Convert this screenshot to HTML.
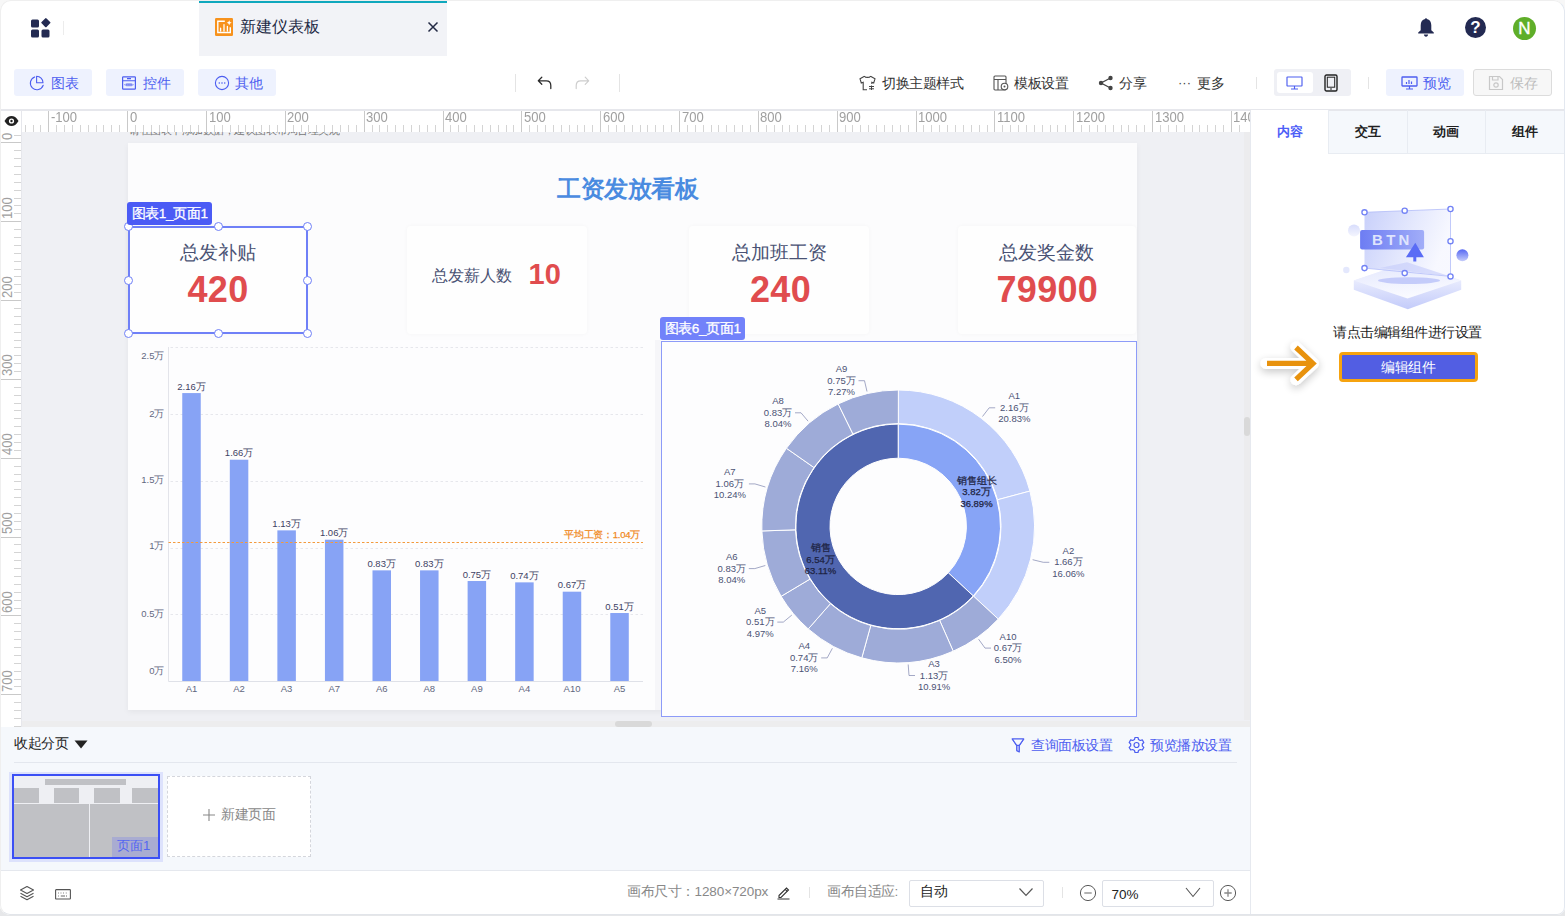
<!DOCTYPE html>
<html><head><meta charset="utf-8">
<style>
*{box-sizing:border-box;margin:0;padding:0}
html,body{width:1565px;height:916px;overflow:hidden;background:linear-gradient(#f7f7f7,#f7f7f7 800px,#e6e7e9 900px);font-family:"Liberation Sans",sans-serif;color:#222}
.abs{position:absolute}
#page{position:absolute;left:0;top:0;width:1565px;height:915px;background:#fff;border-radius:11px 12px 8px 10px;overflow:hidden}
#pb{position:absolute;left:0;top:0;width:1565px;height:915px;border:1px solid #efefef;border-right-color:#e3e8f0;border-bottom-color:#e2e5ea;border-radius:11px 12px 8px 10px;pointer-events:none}
.t{position:absolute;white-space:nowrap;line-height:1}
.btn{position:absolute;top:69px;height:27px;width:78px;background:#eef2fe;border-radius:3px}
.sep{position:absolute;width:1px;background:#e4e4e4}
</style></head><body>
<div id="page">
<!-- HEADER -->
<svg class="abs" style="left:30px;top:18px" width="22" height="21" viewBox="0 0 22 21">
 <rect x="1" y="1.5" width="8" height="8" rx="1.5" fill="#232a52"/>
 <rect x="1" y="11.5" width="8" height="8" rx="1.5" fill="#232a52"/>
 <rect x="11.5" y="11.5" width="8" height="8" rx="1.5" fill="#232a52"/>
 <rect x="12" y="1" width="7" height="7" rx="1" fill="#232a52" transform="rotate(45 15.5 5)"/>
</svg>
<div class="sep" style="left:63px;top:21px;height:14px;background:#ececec"></div>
<div class="abs" style="left:199px;top:0;width:248px;height:56px;background:#f2f3f7;border-top:3px solid #0fa8bd"></div>
<svg class="abs" style="left:215px;top:18px" width="18" height="18" viewBox="0 0 18 18">
 <rect width="18" height="18" rx="1.2" fill="#f7921c"/>
 <path d="M9.8 3.2H2.8V14.5H15.3V9.2" stroke="#fff" stroke-width="1.4" fill="none"/>
 <path d="M5.6 13V10.2M9 13V6.6M12.4 13V8.4" stroke="#fff" stroke-width="1.3" stroke-linecap="round"/>
 <path d="M14.2 2.3Q14.5 4.5 16.7 4.8Q14.5 5.1 14.2 7.3Q13.9 5.1 11.7 4.8Q13.9 4.5 14.2 2.3Z" fill="#fff"/>
</svg>
<div class="t" style="left:240px;top:19px;font-size:16px;color:#232a45">新建仪表板</div>
<svg class="abs" style="left:427px;top:21px" width="12" height="12" viewBox="0 0 12 12"><path d="M1.5 1.5L10.5 10.5M10.5 1.5L1.5 10.5" stroke="#232a45" stroke-width="1.5"/></svg>

<svg class="abs" style="left:1417px;top:17px" width="18" height="21" viewBox="0 0 18 21">
 <path d="M9 1.2C9.7 1.2 9.9 1.6 9.9 2.1C12.7 2.7 14.3 5 14.3 8.2V13.2L16.8 15.5V16.5H1.2V15.5L3.7 13.2V8.2C3.7 5 5.3 2.7 8.1 2.1C8.1 1.6 8.3 1.2 9 1.2Z" fill="#232a52"/>
 <path d="M6.9 17.4H11.1C11.1 18.6 10.2 19.7 9 19.7S6.9 18.6 6.9 17.4Z" fill="#232a52"/>
</svg>
<div class="abs" style="left:1465px;top:17px;width:21px;height:21px;border-radius:50%;background:#232a52;color:#fff;font-size:17px;font-weight:bold;text-align:center;line-height:22px">?</div>
<div class="abs" style="left:1513px;top:16.5px;width:23px;height:23px;border-radius:50%;background:#5fae29;color:#fff;font-size:17px;-webkit-text-stroke:0.4px #fff;text-align:center;line-height:23px">N</div>

<!-- TOOLBAR -->
<div class="btn" style="left:14px"></div>
<div class="btn" style="left:106px"></div>
<div class="btn" style="left:198px"></div>
<svg class="abs" style="left:29px;top:75px" width="16" height="16" viewBox="0 0 16 16"><path d="M5.7 1.9A6.6 6.6 0 1 0 14.2 10.3" fill="none" stroke="#4d5ef0" stroke-width="1.1" stroke-linecap="round"/><path d="M7.6 1.3V7.7H14A6.4 6.4 0 0 0 7.6 1.3Z" fill="none" stroke="#4d5ef0" stroke-width="1.1" stroke-linejoin="round"/></svg>
<div class="t" style="left:51px;top:77px;font-size:13.5px;letter-spacing:-0.5px;color:#4d5ef0">图表</div>
<svg class="abs" style="left:121px;top:75px" width="16" height="16" viewBox="0 0 16 16"><rect x="1.6" y="1.8" width="12.8" height="12.4" rx="0.8" fill="none" stroke="#4d5ef0" stroke-width="1.2"/><path d="M1.6 5.8H14.4M6 3.6H10" stroke="#4d5ef0" stroke-width="1.1"/><rect x="4.2" y="8.2" width="7.6" height="3" rx="1.5" fill="#8e99f5"/><path d="M3 9.7H13" stroke="#4d5ef0" stroke-width="0.6" stroke-dasharray="1,1.2"/></svg>
<div class="t" style="left:143px;top:77px;font-size:13.5px;letter-spacing:-0.5px;color:#4d5ef0">控件</div>
<svg class="abs" style="left:214px;top:75px" width="16" height="16" viewBox="0 0 16 16"><circle cx="8" cy="8" r="6.6" fill="none" stroke="#4d5ef0" stroke-width="1.1"/><circle cx="5.3" cy="8" r=".8" fill="#4d5ef0"/><circle cx="8" cy="8" r=".8" fill="#4d5ef0"/><circle cx="10.7" cy="8" r=".8" fill="#4d5ef0"/></svg>
<div class="t" style="left:235px;top:77px;font-size:13.5px;letter-spacing:-0.5px;color:#4d5ef0">其他</div>

<div class="sep" style="left:515px;top:74px;height:18px"></div>
<svg class="abs" style="left:537px;top:76px" width="16" height="14" viewBox="0 0 16 14"><path d="M4.8 1.2L1.3 4.8L4.8 8.3M1.3 4.8H9.3C12 4.8 13.8 6.6 13.8 9.6V12.6" fill="none" stroke="#2a2a2a" stroke-width="1.25" stroke-linecap="round" stroke-linejoin="round"/></svg>
<svg class="abs" style="left:574px;top:76px" width="16" height="14" viewBox="0 0 16 14"><path d="M11.2 1.2L14.7 4.8L11.2 8.3M14.7 4.8H6.7C4 4.8 2.2 6.6 2.2 9.6V12.6" fill="none" stroke="#cdcdcd" stroke-width="1.15" stroke-linecap="round" stroke-linejoin="round"/></svg>
<div class="sep" style="left:619px;top:74px;height:18px"></div>

<svg class="abs" style="left:859px;top:75px" width="17" height="16" viewBox="0 0 17 16"><path d="M5.5 1.2L1 3.8L2.3 8L4.2 7.3V14.8H8M11.5 1.2L16 3.8L14.7 8L12.8 7.3V9M5.5 1.2C6.3 2.8 10.7 2.8 11.5 1.2" fill="none" stroke="#444" stroke-width="1.1"/><path d="M10 11.5H15M10 13.8H15M12.5 10.5V15" stroke="#444" stroke-width="1"/></svg>
<div class="t" style="left:882px;top:77px;font-size:13.5px;letter-spacing:-0.5px;color:#333">切换主题样式</div>
<svg class="abs" style="left:993px;top:75px" width="16" height="16" viewBox="0 0 16 16"><rect x="1" y="1" width="12" height="14" rx="1" fill="none" stroke="#555" stroke-width="1.1"/><path d="M1 4.5H13M5 4.5V15" stroke="#555" stroke-width="1.1"/><circle cx="11.5" cy="11.5" r="3.3" fill="#fff" stroke="#555" stroke-width="1.1"/><circle cx="11.5" cy="11.5" r="1" fill="#555"/></svg>
<div class="t" style="left:1014px;top:77px;font-size:13.5px;letter-spacing:-0.5px;color:#333">模板设置</div>
<svg class="abs" style="left:1098px;top:75px" width="16" height="16" viewBox="0 0 16 16"><circle cx="12.5" cy="3" r="2.2" fill="#444"/><circle cx="3" cy="8" r="2.2" fill="#444"/><circle cx="12.5" cy="13" r="2.2" fill="#444"/><path d="M12.5 3L3 8L12.5 13" fill="none" stroke="#444" stroke-width="1.3"/></svg>
<div class="t" style="left:1119px;top:77px;font-size:13.5px;letter-spacing:-0.5px;color:#333">分享</div>
<div class="t" style="left:1178px;top:75.5px;font-size:13px;color:#444;letter-spacing:0px">···</div>
<div class="t" style="left:1197px;top:77px;font-size:13.5px;letter-spacing:-0.5px;color:#333">更多</div>
<div class="sep" style="left:1256px;top:77px;height:12px"></div>
<div class="abs" style="left:1274px;top:69px;width:77px;height:27px;background:#eff0f5;border-radius:3px"></div>
<div class="abs" style="left:1277px;top:72px;width:36px;height:21px;background:#fff;border-radius:3px"></div>
<svg class="abs" style="left:1286px;top:76px" width="17" height="14" viewBox="0 0 17 14"><rect x="1" y="1" width="15" height="9" rx=".5" fill="none" stroke="#4d5ef0" stroke-width="1.15"/><path d="M8.5 10V12.5M5 13H12" stroke="#4d5ef0" stroke-width="1.15"/></svg>
<svg class="abs" style="left:1324px;top:74px" width="14" height="18" viewBox="0 0 14 18"><rect x="1" y="1" width="12" height="16" rx="1.5" fill="none" stroke="#222" stroke-width="1.4"/><rect x="3.3" y="3.2" width="7.4" height="10" fill="none" stroke="#222" stroke-width="1"/><path d="M6 15H8" stroke="#222" stroke-width="1"/></svg>
<div class="sep" style="left:1368px;top:77px;height:12px"></div>
<div class="abs" style="left:1386px;top:69px;width:78px;height:27px;background:#eef2fe;border-radius:3px"></div>
<svg class="abs" style="left:1401px;top:76px" width="17" height="14" viewBox="0 0 17 14"><rect x="1" y="1" width="15" height="9" rx=".5" fill="none" stroke="#4d5ef0" stroke-width="1.3"/><path d="M8.5 10V12.5M5 13H12M5.5 8V6M8 8V4M10.5 8V5.5" stroke="#4d5ef0" stroke-width="1.2"/></svg>
<div class="t" style="left:1423px;top:77px;font-size:13.5px;letter-spacing:-0.5px;color:#4d5ef0">预览</div>
<div class="abs" style="left:1473px;top:69px;width:79px;height:27px;background:#f7f7f7;border:1px solid #dcdcdc;border-radius:3px"></div>
<svg class="abs" style="left:1488px;top:75px" width="16" height="16" viewBox="0 0 16 16"><path d="M1.5 1.5H11.5L14.5 4.5V14.5H1.5Z" fill="none" stroke="#c8c8c8" stroke-width="1.2"/><path d="M4.5 1.5V5H10V1.5" fill="none" stroke="#c8c8c8" stroke-width="1.2"/><circle cx="8" cy="10" r="2.2" fill="none" stroke="#c8c8c8" stroke-width="1.2"/></svg>
<div class="t" style="left:1510px;top:77px;font-size:13.5px;letter-spacing:-0.5px;color:#bdbdbd">保存</div>

<!-- RULERS & CANVAS -->

<div id="canvas" class="abs" style="left:22px;top:132px;width:1229px;height:594px;background:#eff0f4;overflow:hidden"></div>
<div class="abs" style="left:128px;top:132px;width:212px;height:4.5px;overflow:hidden"><div class="t" style="left:1px;top:-7.5px;font-size:11px;letter-spacing:-0.5px;color:#777">请在图表中添加数据，建议图表布局合理美观，并检查。</div></div>
<div class="abs" style="left:127.5px;top:143px;width:1009px;height:567px;background:#fcfcfd;box-shadow:0 2px 6px rgba(0,0,0,0.05)"></div>
<div class="t" style="left:557px;top:177.5px;font-size:23.5px;letter-spacing:-0.5px;font-weight:bold;color:#4a8be0">工资发放看板</div>
<div class="abs" style="left:128px;top:226px;width:179px;height:108px;background:#fefefe;border-radius:4px;box-shadow:0 0 4px rgba(0,0,0,0.035)"></div>
<div class="abs" style="left:407px;top:226px;width:180px;height:108px;background:#fefefe;border-radius:4px;box-shadow:0 0 4px rgba(0,0,0,0.035)"></div>
<div class="abs" style="left:689px;top:226px;width:180px;height:108px;background:#fefefe;border-radius:4px;box-shadow:0 0 4px rgba(0,0,0,0.035)"></div>
<div class="abs" style="left:958px;top:226px;width:178px;height:108px;background:#fefefe;border-radius:4px;box-shadow:0 0 4px rgba(0,0,0,0.035)"></div>
<div class="t" style="left:180px;top:243px;font-size:19px;color:#4a5274">总发补贴</div>
<div class="t" style="left:187.5px;top:271.5px;font-size:36px;letter-spacing:0.3px;font-weight:bold;color:#e04c4e">420</div>
<div class="t" style="left:432px;top:268px;font-size:16px;color:#4a5274">总发薪人数</div>
<div class="t" style="left:528.5px;top:259.5px;font-size:29px;font-weight:bold;color:#e04c4e">10</div>
<div class="t" style="left:732px;top:243px;font-size:19px;color:#4a5274">总加班工资</div>
<div class="t" style="left:750px;top:271.5px;font-size:36px;letter-spacing:0.3px;font-weight:bold;color:#e04c4e">240</div>
<div class="t" style="left:999px;top:243px;font-size:19px;color:#4a5274">总发奖金数</div>
<div class="t" style="left:996.5px;top:271.5px;font-size:36px;letter-spacing:0.3px;font-weight:bold;color:#e04c4e">79900</div>
<div class="abs" style="left:128px;top:340px;width:528px;height:370px;background:#fdfdfe"></div>
<svg class="abs" style="left:0;top:0" width="1565" height="916" viewBox="0 0 1565 916"><line x1="168.5" y1="681.5" x2="643" y2="681.5" stroke="#dfe1e8" stroke-width="1"/><line x1="170.5" y1="614.5" x2="643" y2="614.5" stroke="#e6e7ec" stroke-width="1" stroke-dasharray="2.5,2.5"/><line x1="170.5" y1="548.5" x2="643" y2="548.5" stroke="#e6e7ec" stroke-width="1" stroke-dasharray="2.5,2.5"/><line x1="170.5" y1="481.5" x2="643" y2="481.5" stroke="#e6e7ec" stroke-width="1" stroke-dasharray="2.5,2.5"/><line x1="170.5" y1="414.5" x2="643" y2="414.5" stroke="#e6e7ec" stroke-width="1" stroke-dasharray="2.5,2.5"/><line x1="170.5" y1="347.5" x2="643" y2="347.5" stroke="#e6e7ec" stroke-width="1" stroke-dasharray="2.5,2.5"/><line x1="168.5" y1="347" x2="168.5" y2="681.5" stroke="#e3e4ea" stroke-width="1"/><rect x="182.25" y="393.07" width="18.5" height="287.93" fill="#87a3f5"/><rect x="229.81" y="459.72" width="18.5" height="221.28" fill="#87a3f5"/><rect x="277.37" y="530.37" width="18.5" height="150.63" fill="#87a3f5"/><rect x="324.93" y="539.70" width="18.5" height="141.30" fill="#87a3f5"/><rect x="372.49" y="570.36" width="18.5" height="110.64" fill="#87a3f5"/><rect x="420.05" y="570.36" width="18.5" height="110.64" fill="#87a3f5"/><rect x="467.61" y="581.02" width="18.5" height="99.98" fill="#87a3f5"/><rect x="515.17" y="582.36" width="18.5" height="98.64" fill="#87a3f5"/><rect x="562.73" y="591.69" width="18.5" height="89.31" fill="#87a3f5"/><rect x="610.29" y="613.02" width="18.5" height="67.98" fill="#87a3f5"/><line x1="168.5" y1="542.5" x2="643" y2="542.5" stroke="#f39a3c" stroke-width="1" stroke-dasharray="2.5,2"/></svg>
<div class="t" style="left:151.5px;width:80px;text-align:center;top:381.6px;font-size:9.5px;color:#3d4263">2.16万</div>
<div class="t" style="left:151.5px;width:80px;text-align:center;top:683.5px;font-size:9.5px;color:#62677e">A1</div>
<div class="t" style="left:199.1px;width:80px;text-align:center;top:448.2px;font-size:9.5px;color:#3d4263">1.66万</div>
<div class="t" style="left:199.1px;width:80px;text-align:center;top:683.5px;font-size:9.5px;color:#62677e">A2</div>
<div class="t" style="left:246.6px;width:80px;text-align:center;top:518.9px;font-size:9.5px;color:#3d4263">1.13万</div>
<div class="t" style="left:246.6px;width:80px;text-align:center;top:683.5px;font-size:9.5px;color:#62677e">A3</div>
<div class="t" style="left:294.2px;width:80px;text-align:center;top:528.2px;font-size:9.5px;color:#3d4263">1.06万</div>
<div class="t" style="left:294.2px;width:80px;text-align:center;top:683.5px;font-size:9.5px;color:#62677e">A7</div>
<div class="t" style="left:341.7px;width:80px;text-align:center;top:558.9px;font-size:9.5px;color:#3d4263">0.83万</div>
<div class="t" style="left:341.7px;width:80px;text-align:center;top:683.5px;font-size:9.5px;color:#62677e">A6</div>
<div class="t" style="left:389.3px;width:80px;text-align:center;top:558.9px;font-size:9.5px;color:#3d4263">0.83万</div>
<div class="t" style="left:389.3px;width:80px;text-align:center;top:683.5px;font-size:9.5px;color:#62677e">A8</div>
<div class="t" style="left:436.9px;width:80px;text-align:center;top:569.5px;font-size:9.5px;color:#3d4263">0.75万</div>
<div class="t" style="left:436.9px;width:80px;text-align:center;top:683.5px;font-size:9.5px;color:#62677e">A9</div>
<div class="t" style="left:484.4px;width:80px;text-align:center;top:570.9px;font-size:9.5px;color:#3d4263">0.74万</div>
<div class="t" style="left:484.4px;width:80px;text-align:center;top:683.5px;font-size:9.5px;color:#62677e">A4</div>
<div class="t" style="left:532.0px;width:80px;text-align:center;top:580.2px;font-size:9.5px;color:#3d4263">0.67万</div>
<div class="t" style="left:532.0px;width:80px;text-align:center;top:683.5px;font-size:9.5px;color:#62677e">A10</div>
<div class="t" style="left:579.5px;width:80px;text-align:center;top:601.5px;font-size:9.5px;color:#3d4263">0.51万</div>
<div class="t" style="left:579.5px;width:80px;text-align:center;top:683.5px;font-size:9.5px;color:#62677e">A5</div>
<div class="t" style="left:100px;width:64.5px;text-align:right;top:665.9px;font-size:9.5px;color:#62677e">0万</div>
<div class="t" style="left:100px;width:64.5px;text-align:right;top:608.7px;font-size:9.5px;color:#62677e">0.5万</div>
<div class="t" style="left:100px;width:64.5px;text-align:right;top:541.2px;font-size:9.5px;color:#62677e">1万</div>
<div class="t" style="left:100px;width:64.5px;text-align:right;top:474.9px;font-size:9.5px;color:#62677e">1.5万</div>
<div class="t" style="left:100px;width:64.5px;text-align:right;top:408.5px;font-size:9.5px;color:#62677e">2万</div>
<div class="t" style="left:100px;width:64.5px;text-align:right;top:350.5px;font-size:9.5px;color:#62677e">2.5万</div>
<div class="t" style="left:540px;width:100px;text-align:right;top:529.5px;font-size:9.5px;letter-spacing:-0.25px;color:#f08a1e;-webkit-text-stroke:0.25px #f08a1e">平均工资：1.04万</div>
<div class="abs" style="left:655px;top:340px;width:6px;height:370px;background:#f6f6f9"></div>
<div class="abs" style="left:661px;top:341px;width:476px;height:376px;background:#fdfdfe"></div>
<svg class="abs" style="left:0;top:0" width="1565" height="916" viewBox="0 0 1565 916"><path d="M898.20 424.10A102.3 102.3 0 0 1 973.26 595.91L948.24 572.74A68.2 68.2 0 0 0 898.20 458.20Z" fill="#87a4f6" stroke="#fff" stroke-width="1"/><path d="M973.26 595.91A102.3 102.3 0 1 1 898.20 424.10L898.20 458.20A68.2 68.2 0 1 0 948.24 572.74Z" fill="#5066b0" stroke="#fff" stroke-width="1"/><path d="M898.20 390.00A136.4 136.4 0 0 1 1029.94 491.07L997.49 499.77A102.8 102.8 0 0 0 898.20 423.60Z" fill="#c1cffa" stroke="#fff" stroke-width="1"/><path d="M1029.94 491.07A136.4 136.4 0 0 1 998.27 619.08L973.62 596.25A102.8 102.8 0 0 0 997.49 499.77Z" fill="#c1cffa" stroke="#fff" stroke-width="1"/><path d="M998.27 619.08A136.4 136.4 0 0 1 953.23 651.20L939.68 620.46A102.8 102.8 0 0 0 973.62 596.25Z" fill="#9eabd8" stroke="#fff" stroke-width="1"/><path d="M953.23 651.20A136.4 136.4 0 0 1 861.79 657.85L870.76 625.47A102.8 102.8 0 0 0 939.68 620.46Z" fill="#9eabd8" stroke="#fff" stroke-width="1"/><path d="M861.79 657.85A136.4 136.4 0 0 1 808.25 628.94L830.41 603.68A102.8 102.8 0 0 0 870.76 625.47Z" fill="#9eabd8" stroke="#fff" stroke-width="1"/><path d="M808.25 628.94A136.4 136.4 0 0 1 781.10 596.35L809.95 579.12A102.8 102.8 0 0 0 830.41 603.68Z" fill="#9eabd8" stroke="#fff" stroke-width="1"/><path d="M781.10 596.35A136.4 136.4 0 0 1 761.88 530.94L795.46 529.82A102.8 102.8 0 0 0 809.95 579.12Z" fill="#9eabd8" stroke="#fff" stroke-width="1"/><path d="M761.88 530.94A136.4 136.4 0 0 1 786.41 448.25L813.95 467.50A102.8 102.8 0 0 0 795.46 529.82Z" fill="#9eabd8" stroke="#fff" stroke-width="1"/><path d="M786.41 448.25A136.4 136.4 0 0 1 838.19 403.91L852.97 434.08A102.8 102.8 0 0 0 813.95 467.50Z" fill="#9eabd8" stroke="#fff" stroke-width="1"/><path d="M838.19 403.91A136.4 136.4 0 0 1 898.37 390.00L898.33 423.60A102.8 102.8 0 0 0 852.97 434.08Z" fill="#9eabd8" stroke="#fff" stroke-width="1"/><path d="M982.5 416.5L989.2 407.8L995.2 407.8" fill="none" stroke="#7c84ad" stroke-width="0.7"/><path d="M1032.6 559.7L1043.3 562.3L1049.3 562.3" fill="none" stroke="#7c84ad" stroke-width="0.7"/><path d="M978.6 639.2L985.0 648.1L991.0 648.1" fill="none" stroke="#7c84ad" stroke-width="0.7"/><path d="M908.2 664.5L909.0 675.5L915.0 675.5" fill="none" stroke="#7c84ad" stroke-width="0.7"/><path d="M832.4 648.3L827.2 657.9L821.2 657.9" fill="none" stroke="#7c84ad" stroke-width="0.7"/><path d="M791.8 615.1L783.3 622.1L777.3 622.1" fill="none" stroke="#7c84ad" stroke-width="0.7"/><path d="M765.3 565.5L754.8 568.6L748.8 568.6" fill="none" stroke="#7c84ad" stroke-width="0.7"/><path d="M765.4 487.0L754.9 483.9L748.9 483.9" fill="none" stroke="#7c84ad" stroke-width="0.7"/><path d="M808.1 421.2L801.0 412.8L795.0 412.8" fill="none" stroke="#7c84ad" stroke-width="0.7"/><path d="M867.0 391.5L864.5 380.7L858.5 380.7" fill="none" stroke="#7c84ad" stroke-width="0.7"/></svg>
<div class="t" style="left:974.3px;width:80px;text-align:center;top:390.3px;font-size:9.5px;line-height:11.5px;color:#4b5274;white-space:pre">A1
2.16万
20.83%</div>
<div class="t" style="left:1028.4px;width:80px;text-align:center;top:544.8px;font-size:9.5px;line-height:11.5px;color:#4b5274;white-space:pre">A2
1.66万
16.06%</div>
<div class="t" style="left:968.0px;width:80px;text-align:center;top:630.6px;font-size:9.5px;line-height:11.5px;color:#4b5274;white-space:pre">A10
0.67万
6.50%</div>
<div class="t" style="left:894.1px;width:80px;text-align:center;top:658.0px;font-size:9.5px;line-height:11.5px;color:#4b5274;white-space:pre">A3
1.13万
10.91%</div>
<div class="t" style="left:764.2px;width:80px;text-align:center;top:640.4px;font-size:9.5px;line-height:11.5px;color:#4b5274;white-space:pre">A4
0.74万
7.16%</div>
<div class="t" style="left:720.3px;width:80px;text-align:center;top:604.6px;font-size:9.5px;line-height:11.5px;color:#4b5274;white-space:pre">A5
0.51万
4.97%</div>
<div class="t" style="left:691.8px;width:80px;text-align:center;top:551.1px;font-size:9.5px;line-height:11.5px;color:#4b5274;white-space:pre">A6
0.83万
8.04%</div>
<div class="t" style="left:689.8px;width:80px;text-align:center;top:466.4px;font-size:9.5px;line-height:11.5px;color:#4b5274;white-space:pre">A7
1.06万
10.24%</div>
<div class="t" style="left:738.0px;width:80px;text-align:center;top:395.3px;font-size:9.5px;line-height:11.5px;color:#4b5274;white-space:pre">A8
0.83万
8.04%</div>
<div class="t" style="left:801.5px;width:80px;text-align:center;top:363.2px;font-size:9.5px;line-height:11.5px;color:#4b5274;white-space:pre">A9
0.75万
7.27%</div>
<div class="t" style="left:936.5px;width:80px;text-align:center;top:474.5px;font-size:9.5px;line-height:11.5px;color:#1d2342;-webkit-text-stroke:0.25px #1d2342;white-space:pre">销售组长
3.82万
36.89%</div>
<div class="t" style="left:780.5px;width:80px;text-align:center;top:542.0px;font-size:9.5px;line-height:11.5px;color:#1d2342;-webkit-text-stroke:0.25px #1d2342;white-space:pre">销售
6.54万
63.11%</div>
<div class="abs" style="left:128px;top:226px;width:180px;height:108px;border:2px solid #6f80f7"></div>
<div class="abs" style="left:124.25px;top:222.25px;width:9px;height:9px;border-radius:50%;background:#fff;border:1.5px solid #6f80f7"></div>
<div class="abs" style="left:124.25px;top:275.5px;width:9px;height:9px;border-radius:50%;background:#fff;border:1.5px solid #6f80f7"></div>
<div class="abs" style="left:124.25px;top:328.75px;width:9px;height:9px;border-radius:50%;background:#fff;border:1.5px solid #6f80f7"></div>
<div class="abs" style="left:213.5px;top:222.25px;width:9px;height:9px;border-radius:50%;background:#fff;border:1.5px solid #6f80f7"></div>
<div class="abs" style="left:213.5px;top:328.75px;width:9px;height:9px;border-radius:50%;background:#fff;border:1.5px solid #6f80f7"></div>
<div class="abs" style="left:302.75px;top:222.25px;width:9px;height:9px;border-radius:50%;background:#fff;border:1.5px solid #6f80f7"></div>
<div class="abs" style="left:302.75px;top:275.5px;width:9px;height:9px;border-radius:50%;background:#fff;border:1.5px solid #6f80f7"></div>
<div class="abs" style="left:302.75px;top:328.75px;width:9px;height:9px;border-radius:50%;background:#fff;border:1.5px solid #6f80f7"></div>
<div class="abs" style="left:127px;top:202px;width:85px;height:22.5px;background:#4b5bf5;border-radius:3px"></div>
<div class="t" style="left:131.5px;top:206.5px;font-size:13.5px;letter-spacing:-0.35px;-webkit-text-stroke:0.3px #fff;color:#fff">图表1_页面1</div>
<div class="abs" style="left:661px;top:341px;width:476px;height:376px;border:1.5px solid #8d9bf8"></div>
<div class="abs" style="left:659.5px;top:317px;width:85px;height:23px;background:#7282fa;border-radius:3px"></div>
<div class="t" style="left:664.5px;top:321.5px;font-size:13.5px;letter-spacing:-0.35px;-webkit-text-stroke:0.3px #fff;color:#fff">图表6_页面1</div>
<div id="hruler" class="abs" style="left:22px;top:111px;width:1227.5px;height:21px;background:#fff;overflow:hidden"><svg width="1228" height="21" style="position:absolute;left:0;top:0"><line x1="3.5" y1="14" x2="3.5" y2="21" stroke="#d4d4d4" stroke-width="1"/><line x1="11.5" y1="14" x2="11.5" y2="21" stroke="#d4d4d4" stroke-width="1"/><line x1="18.5" y1="14" x2="18.5" y2="21" stroke="#d4d4d4" stroke-width="1"/><line x1="26.5" y1="0" x2="26.5" y2="21" stroke="#c9c9c9" stroke-width="1"/><line x1="34.5" y1="14" x2="34.5" y2="21" stroke="#d4d4d4" stroke-width="1"/><line x1="42.5" y1="14" x2="42.5" y2="21" stroke="#d4d4d4" stroke-width="1"/><line x1="50.5" y1="14" x2="50.5" y2="21" stroke="#d4d4d4" stroke-width="1"/><line x1="58.5" y1="14" x2="58.5" y2="21" stroke="#d4d4d4" stroke-width="1"/><line x1="66.5" y1="14" x2="66.5" y2="21" stroke="#d4d4d4" stroke-width="1"/><line x1="74.5" y1="14" x2="74.5" y2="21" stroke="#d4d4d4" stroke-width="1"/><line x1="81.5" y1="14" x2="81.5" y2="21" stroke="#d4d4d4" stroke-width="1"/><line x1="89.5" y1="14" x2="89.5" y2="21" stroke="#d4d4d4" stroke-width="1"/><line x1="97.5" y1="14" x2="97.5" y2="21" stroke="#d4d4d4" stroke-width="1"/><line x1="105.5" y1="0" x2="105.5" y2="21" stroke="#c9c9c9" stroke-width="1"/><line x1="113.5" y1="14" x2="113.5" y2="21" stroke="#d4d4d4" stroke-width="1"/><line x1="121.5" y1="14" x2="121.5" y2="21" stroke="#d4d4d4" stroke-width="1"/><line x1="129.5" y1="14" x2="129.5" y2="21" stroke="#d4d4d4" stroke-width="1"/><line x1="137.5" y1="14" x2="137.5" y2="21" stroke="#d4d4d4" stroke-width="1"/><line x1="145.5" y1="14" x2="145.5" y2="21" stroke="#d4d4d4" stroke-width="1"/><line x1="152.5" y1="14" x2="152.5" y2="21" stroke="#d4d4d4" stroke-width="1"/><line x1="160.5" y1="14" x2="160.5" y2="21" stroke="#d4d4d4" stroke-width="1"/><line x1="168.5" y1="14" x2="168.5" y2="21" stroke="#d4d4d4" stroke-width="1"/><line x1="176.5" y1="14" x2="176.5" y2="21" stroke="#d4d4d4" stroke-width="1"/><line x1="184.5" y1="0" x2="184.5" y2="21" stroke="#c9c9c9" stroke-width="1"/><line x1="192.5" y1="14" x2="192.5" y2="21" stroke="#d4d4d4" stroke-width="1"/><line x1="200.5" y1="14" x2="200.5" y2="21" stroke="#d4d4d4" stroke-width="1"/><line x1="208.5" y1="14" x2="208.5" y2="21" stroke="#d4d4d4" stroke-width="1"/><line x1="216.5" y1="14" x2="216.5" y2="21" stroke="#d4d4d4" stroke-width="1"/><line x1="223.5" y1="14" x2="223.5" y2="21" stroke="#d4d4d4" stroke-width="1"/><line x1="231.5" y1="14" x2="231.5" y2="21" stroke="#d4d4d4" stroke-width="1"/><line x1="239.5" y1="14" x2="239.5" y2="21" stroke="#d4d4d4" stroke-width="1"/><line x1="247.5" y1="14" x2="247.5" y2="21" stroke="#d4d4d4" stroke-width="1"/><line x1="255.5" y1="14" x2="255.5" y2="21" stroke="#d4d4d4" stroke-width="1"/><line x1="263.5" y1="0" x2="263.5" y2="21" stroke="#c9c9c9" stroke-width="1"/><line x1="271.5" y1="14" x2="271.5" y2="21" stroke="#d4d4d4" stroke-width="1"/><line x1="279.5" y1="14" x2="279.5" y2="21" stroke="#d4d4d4" stroke-width="1"/><line x1="286.5" y1="14" x2="286.5" y2="21" stroke="#d4d4d4" stroke-width="1"/><line x1="294.5" y1="14" x2="294.5" y2="21" stroke="#d4d4d4" stroke-width="1"/><line x1="302.5" y1="14" x2="302.5" y2="21" stroke="#d4d4d4" stroke-width="1"/><line x1="310.5" y1="14" x2="310.5" y2="21" stroke="#d4d4d4" stroke-width="1"/><line x1="318.5" y1="14" x2="318.5" y2="21" stroke="#d4d4d4" stroke-width="1"/><line x1="326.5" y1="14" x2="326.5" y2="21" stroke="#d4d4d4" stroke-width="1"/><line x1="334.5" y1="14" x2="334.5" y2="21" stroke="#d4d4d4" stroke-width="1"/><line x1="342.5" y1="0" x2="342.5" y2="21" stroke="#c9c9c9" stroke-width="1"/><line x1="350.5" y1="14" x2="350.5" y2="21" stroke="#d4d4d4" stroke-width="1"/><line x1="357.5" y1="14" x2="357.5" y2="21" stroke="#d4d4d4" stroke-width="1"/><line x1="365.5" y1="14" x2="365.5" y2="21" stroke="#d4d4d4" stroke-width="1"/><line x1="373.5" y1="14" x2="373.5" y2="21" stroke="#d4d4d4" stroke-width="1"/><line x1="381.5" y1="14" x2="381.5" y2="21" stroke="#d4d4d4" stroke-width="1"/><line x1="389.5" y1="14" x2="389.5" y2="21" stroke="#d4d4d4" stroke-width="1"/><line x1="397.5" y1="14" x2="397.5" y2="21" stroke="#d4d4d4" stroke-width="1"/><line x1="405.5" y1="14" x2="405.5" y2="21" stroke="#d4d4d4" stroke-width="1"/><line x1="413.5" y1="14" x2="413.5" y2="21" stroke="#d4d4d4" stroke-width="1"/><line x1="421.5" y1="0" x2="421.5" y2="21" stroke="#c9c9c9" stroke-width="1"/><line x1="428.5" y1="14" x2="428.5" y2="21" stroke="#d4d4d4" stroke-width="1"/><line x1="436.5" y1="14" x2="436.5" y2="21" stroke="#d4d4d4" stroke-width="1"/><line x1="444.5" y1="14" x2="444.5" y2="21" stroke="#d4d4d4" stroke-width="1"/><line x1="452.5" y1="14" x2="452.5" y2="21" stroke="#d4d4d4" stroke-width="1"/><line x1="460.5" y1="14" x2="460.5" y2="21" stroke="#d4d4d4" stroke-width="1"/><line x1="468.5" y1="14" x2="468.5" y2="21" stroke="#d4d4d4" stroke-width="1"/><line x1="476.5" y1="14" x2="476.5" y2="21" stroke="#d4d4d4" stroke-width="1"/><line x1="484.5" y1="14" x2="484.5" y2="21" stroke="#d4d4d4" stroke-width="1"/><line x1="491.5" y1="14" x2="491.5" y2="21" stroke="#d4d4d4" stroke-width="1"/><line x1="499.5" y1="0" x2="499.5" y2="21" stroke="#c9c9c9" stroke-width="1"/><line x1="507.5" y1="14" x2="507.5" y2="21" stroke="#d4d4d4" stroke-width="1"/><line x1="515.5" y1="14" x2="515.5" y2="21" stroke="#d4d4d4" stroke-width="1"/><line x1="523.5" y1="14" x2="523.5" y2="21" stroke="#d4d4d4" stroke-width="1"/><line x1="531.5" y1="14" x2="531.5" y2="21" stroke="#d4d4d4" stroke-width="1"/><line x1="539.5" y1="14" x2="539.5" y2="21" stroke="#d4d4d4" stroke-width="1"/><line x1="547.5" y1="14" x2="547.5" y2="21" stroke="#d4d4d4" stroke-width="1"/><line x1="555.5" y1="14" x2="555.5" y2="21" stroke="#d4d4d4" stroke-width="1"/><line x1="562.5" y1="14" x2="562.5" y2="21" stroke="#d4d4d4" stroke-width="1"/><line x1="570.5" y1="14" x2="570.5" y2="21" stroke="#d4d4d4" stroke-width="1"/><line x1="578.5" y1="0" x2="578.5" y2="21" stroke="#c9c9c9" stroke-width="1"/><line x1="586.5" y1="14" x2="586.5" y2="21" stroke="#d4d4d4" stroke-width="1"/><line x1="594.5" y1="14" x2="594.5" y2="21" stroke="#d4d4d4" stroke-width="1"/><line x1="602.5" y1="14" x2="602.5" y2="21" stroke="#d4d4d4" stroke-width="1"/><line x1="610.5" y1="14" x2="610.5" y2="21" stroke="#d4d4d4" stroke-width="1"/><line x1="618.5" y1="14" x2="618.5" y2="21" stroke="#d4d4d4" stroke-width="1"/><line x1="625.5" y1="14" x2="625.5" y2="21" stroke="#d4d4d4" stroke-width="1"/><line x1="633.5" y1="14" x2="633.5" y2="21" stroke="#d4d4d4" stroke-width="1"/><line x1="641.5" y1="14" x2="641.5" y2="21" stroke="#d4d4d4" stroke-width="1"/><line x1="649.5" y1="14" x2="649.5" y2="21" stroke="#d4d4d4" stroke-width="1"/><line x1="657.5" y1="0" x2="657.5" y2="21" stroke="#c9c9c9" stroke-width="1"/><line x1="665.5" y1="14" x2="665.5" y2="21" stroke="#d4d4d4" stroke-width="1"/><line x1="673.5" y1="14" x2="673.5" y2="21" stroke="#d4d4d4" stroke-width="1"/><line x1="681.5" y1="14" x2="681.5" y2="21" stroke="#d4d4d4" stroke-width="1"/><line x1="689.5" y1="14" x2="689.5" y2="21" stroke="#d4d4d4" stroke-width="1"/><line x1="696.5" y1="14" x2="696.5" y2="21" stroke="#d4d4d4" stroke-width="1"/><line x1="704.5" y1="14" x2="704.5" y2="21" stroke="#d4d4d4" stroke-width="1"/><line x1="712.5" y1="14" x2="712.5" y2="21" stroke="#d4d4d4" stroke-width="1"/><line x1="720.5" y1="14" x2="720.5" y2="21" stroke="#d4d4d4" stroke-width="1"/><line x1="728.5" y1="14" x2="728.5" y2="21" stroke="#d4d4d4" stroke-width="1"/><line x1="736.5" y1="0" x2="736.5" y2="21" stroke="#c9c9c9" stroke-width="1"/><line x1="744.5" y1="14" x2="744.5" y2="21" stroke="#d4d4d4" stroke-width="1"/><line x1="752.5" y1="14" x2="752.5" y2="21" stroke="#d4d4d4" stroke-width="1"/><line x1="760.5" y1="14" x2="760.5" y2="21" stroke="#d4d4d4" stroke-width="1"/><line x1="767.5" y1="14" x2="767.5" y2="21" stroke="#d4d4d4" stroke-width="1"/><line x1="775.5" y1="14" x2="775.5" y2="21" stroke="#d4d4d4" stroke-width="1"/><line x1="783.5" y1="14" x2="783.5" y2="21" stroke="#d4d4d4" stroke-width="1"/><line x1="791.5" y1="14" x2="791.5" y2="21" stroke="#d4d4d4" stroke-width="1"/><line x1="799.5" y1="14" x2="799.5" y2="21" stroke="#d4d4d4" stroke-width="1"/><line x1="807.5" y1="14" x2="807.5" y2="21" stroke="#d4d4d4" stroke-width="1"/><line x1="815.5" y1="0" x2="815.5" y2="21" stroke="#c9c9c9" stroke-width="1"/><line x1="823.5" y1="14" x2="823.5" y2="21" stroke="#d4d4d4" stroke-width="1"/><line x1="830.5" y1="14" x2="830.5" y2="21" stroke="#d4d4d4" stroke-width="1"/><line x1="838.5" y1="14" x2="838.5" y2="21" stroke="#d4d4d4" stroke-width="1"/><line x1="846.5" y1="14" x2="846.5" y2="21" stroke="#d4d4d4" stroke-width="1"/><line x1="854.5" y1="14" x2="854.5" y2="21" stroke="#d4d4d4" stroke-width="1"/><line x1="862.5" y1="14" x2="862.5" y2="21" stroke="#d4d4d4" stroke-width="1"/><line x1="870.5" y1="14" x2="870.5" y2="21" stroke="#d4d4d4" stroke-width="1"/><line x1="878.5" y1="14" x2="878.5" y2="21" stroke="#d4d4d4" stroke-width="1"/><line x1="886.5" y1="14" x2="886.5" y2="21" stroke="#d4d4d4" stroke-width="1"/><line x1="894.5" y1="0" x2="894.5" y2="21" stroke="#c9c9c9" stroke-width="1"/><line x1="901.5" y1="14" x2="901.5" y2="21" stroke="#d4d4d4" stroke-width="1"/><line x1="909.5" y1="14" x2="909.5" y2="21" stroke="#d4d4d4" stroke-width="1"/><line x1="917.5" y1="14" x2="917.5" y2="21" stroke="#d4d4d4" stroke-width="1"/><line x1="925.5" y1="14" x2="925.5" y2="21" stroke="#d4d4d4" stroke-width="1"/><line x1="933.5" y1="14" x2="933.5" y2="21" stroke="#d4d4d4" stroke-width="1"/><line x1="941.5" y1="14" x2="941.5" y2="21" stroke="#d4d4d4" stroke-width="1"/><line x1="949.5" y1="14" x2="949.5" y2="21" stroke="#d4d4d4" stroke-width="1"/><line x1="957.5" y1="14" x2="957.5" y2="21" stroke="#d4d4d4" stroke-width="1"/><line x1="965.5" y1="14" x2="965.5" y2="21" stroke="#d4d4d4" stroke-width="1"/><line x1="972.5" y1="0" x2="972.5" y2="21" stroke="#c9c9c9" stroke-width="1"/><line x1="980.5" y1="14" x2="980.5" y2="21" stroke="#d4d4d4" stroke-width="1"/><line x1="988.5" y1="14" x2="988.5" y2="21" stroke="#d4d4d4" stroke-width="1"/><line x1="996.5" y1="14" x2="996.5" y2="21" stroke="#d4d4d4" stroke-width="1"/><line x1="1004.5" y1="14" x2="1004.5" y2="21" stroke="#d4d4d4" stroke-width="1"/><line x1="1012.5" y1="14" x2="1012.5" y2="21" stroke="#d4d4d4" stroke-width="1"/><line x1="1020.5" y1="14" x2="1020.5" y2="21" stroke="#d4d4d4" stroke-width="1"/><line x1="1028.5" y1="14" x2="1028.5" y2="21" stroke="#d4d4d4" stroke-width="1"/><line x1="1035.5" y1="14" x2="1035.5" y2="21" stroke="#d4d4d4" stroke-width="1"/><line x1="1043.5" y1="14" x2="1043.5" y2="21" stroke="#d4d4d4" stroke-width="1"/><line x1="1051.5" y1="0" x2="1051.5" y2="21" stroke="#c9c9c9" stroke-width="1"/><line x1="1059.5" y1="14" x2="1059.5" y2="21" stroke="#d4d4d4" stroke-width="1"/><line x1="1067.5" y1="14" x2="1067.5" y2="21" stroke="#d4d4d4" stroke-width="1"/><line x1="1075.5" y1="14" x2="1075.5" y2="21" stroke="#d4d4d4" stroke-width="1"/><line x1="1083.5" y1="14" x2="1083.5" y2="21" stroke="#d4d4d4" stroke-width="1"/><line x1="1091.5" y1="14" x2="1091.5" y2="21" stroke="#d4d4d4" stroke-width="1"/><line x1="1099.5" y1="14" x2="1099.5" y2="21" stroke="#d4d4d4" stroke-width="1"/><line x1="1106.5" y1="14" x2="1106.5" y2="21" stroke="#d4d4d4" stroke-width="1"/><line x1="1114.5" y1="14" x2="1114.5" y2="21" stroke="#d4d4d4" stroke-width="1"/><line x1="1122.5" y1="14" x2="1122.5" y2="21" stroke="#d4d4d4" stroke-width="1"/><line x1="1130.5" y1="0" x2="1130.5" y2="21" stroke="#c9c9c9" stroke-width="1"/><line x1="1138.5" y1="14" x2="1138.5" y2="21" stroke="#d4d4d4" stroke-width="1"/><line x1="1146.5" y1="14" x2="1146.5" y2="21" stroke="#d4d4d4" stroke-width="1"/><line x1="1154.5" y1="14" x2="1154.5" y2="21" stroke="#d4d4d4" stroke-width="1"/><line x1="1162.5" y1="14" x2="1162.5" y2="21" stroke="#d4d4d4" stroke-width="1"/><line x1="1170.5" y1="14" x2="1170.5" y2="21" stroke="#d4d4d4" stroke-width="1"/><line x1="1177.5" y1="14" x2="1177.5" y2="21" stroke="#d4d4d4" stroke-width="1"/><line x1="1185.5" y1="14" x2="1185.5" y2="21" stroke="#d4d4d4" stroke-width="1"/><line x1="1193.5" y1="14" x2="1193.5" y2="21" stroke="#d4d4d4" stroke-width="1"/><line x1="1201.5" y1="14" x2="1201.5" y2="21" stroke="#d4d4d4" stroke-width="1"/><line x1="1209.5" y1="0" x2="1209.5" y2="21" stroke="#c9c9c9" stroke-width="1"/><line x1="1217.5" y1="14" x2="1217.5" y2="21" stroke="#d4d4d4" stroke-width="1"/></svg><div class="t" style="left:28.8px;top:-1px;font-size:14.5px;color:#a0a0a0;transform:scaleX(0.9);transform-origin:0 0">-100</div><div class="t" style="left:107.6px;top:-1px;font-size:14.5px;color:#a0a0a0;transform:scaleX(0.9);transform-origin:0 0">0</div><div class="t" style="left:186.5px;top:-1px;font-size:14.5px;color:#a0a0a0;transform:scaleX(0.9);transform-origin:0 0">100</div><div class="t" style="left:265.3px;top:-1px;font-size:14.5px;color:#a0a0a0;transform:scaleX(0.9);transform-origin:0 0">200</div><div class="t" style="left:344.2px;top:-1px;font-size:14.5px;color:#a0a0a0;transform:scaleX(0.9);transform-origin:0 0">300</div><div class="t" style="left:423.0px;top:-1px;font-size:14.5px;color:#a0a0a0;transform:scaleX(0.9);transform-origin:0 0">400</div><div class="t" style="left:501.8px;top:-1px;font-size:14.5px;color:#a0a0a0;transform:scaleX(0.9);transform-origin:0 0">500</div><div class="t" style="left:580.7px;top:-1px;font-size:14.5px;color:#a0a0a0;transform:scaleX(0.9);transform-origin:0 0">600</div><div class="t" style="left:659.5px;top:-1px;font-size:14.5px;color:#a0a0a0;transform:scaleX(0.9);transform-origin:0 0">700</div><div class="t" style="left:738.4px;top:-1px;font-size:14.5px;color:#a0a0a0;transform:scaleX(0.9);transform-origin:0 0">800</div><div class="t" style="left:817.2px;top:-1px;font-size:14.5px;color:#a0a0a0;transform:scaleX(0.9);transform-origin:0 0">900</div><div class="t" style="left:896.1px;top:-1px;font-size:14.5px;color:#a0a0a0;transform:scaleX(0.9);transform-origin:0 0">1000</div><div class="t" style="left:974.9px;top:-1px;font-size:14.5px;color:#a0a0a0;transform:scaleX(0.9);transform-origin:0 0">1100</div><div class="t" style="left:1053.7px;top:-1px;font-size:14.5px;color:#a0a0a0;transform:scaleX(0.9);transform-origin:0 0">1200</div><div class="t" style="left:1132.6px;top:-1px;font-size:14.5px;color:#a0a0a0;transform:scaleX(0.9);transform-origin:0 0">1300</div><div class="t" style="left:1211.4px;top:-1px;font-size:14.5px;color:#a0a0a0;transform:scaleX(0.9);transform-origin:0 0">1400</div></div>
<div id="vruler" class="abs" style="left:0;top:132px;width:22px;height:595px;background:#fff;overflow:hidden"><svg width="22" height="600" style="position:absolute;left:0;top:0"><line x1="14" y1="3.5" x2="21" y2="3.5" stroke="#d4d4d4" stroke-width="1"/><line x1="1" y1="10.5" x2="21" y2="10.5" stroke="#c9c9c9" stroke-width="1"/><line x1="14" y1="18.5" x2="21" y2="18.5" stroke="#d4d4d4" stroke-width="1"/><line x1="14" y1="26.5" x2="21" y2="26.5" stroke="#d4d4d4" stroke-width="1"/><line x1="14" y1="34.5" x2="21" y2="34.5" stroke="#d4d4d4" stroke-width="1"/><line x1="14" y1="42.5" x2="21" y2="42.5" stroke="#d4d4d4" stroke-width="1"/><line x1="14" y1="50.5" x2="21" y2="50.5" stroke="#d4d4d4" stroke-width="1"/><line x1="14" y1="58.5" x2="21" y2="58.5" stroke="#d4d4d4" stroke-width="1"/><line x1="14" y1="66.5" x2="21" y2="66.5" stroke="#d4d4d4" stroke-width="1"/><line x1="14" y1="73.5" x2="21" y2="73.5" stroke="#d4d4d4" stroke-width="1"/><line x1="14" y1="81.5" x2="21" y2="81.5" stroke="#d4d4d4" stroke-width="1"/><line x1="1" y1="89.5" x2="21" y2="89.5" stroke="#c9c9c9" stroke-width="1"/><line x1="14" y1="97.5" x2="21" y2="97.5" stroke="#d4d4d4" stroke-width="1"/><line x1="14" y1="105.5" x2="21" y2="105.5" stroke="#d4d4d4" stroke-width="1"/><line x1="14" y1="113.5" x2="21" y2="113.5" stroke="#d4d4d4" stroke-width="1"/><line x1="14" y1="121.5" x2="21" y2="121.5" stroke="#d4d4d4" stroke-width="1"/><line x1="14" y1="129.5" x2="21" y2="129.5" stroke="#d4d4d4" stroke-width="1"/><line x1="14" y1="137.5" x2="21" y2="137.5" stroke="#d4d4d4" stroke-width="1"/><line x1="14" y1="144.5" x2="21" y2="144.5" stroke="#d4d4d4" stroke-width="1"/><line x1="14" y1="152.5" x2="21" y2="152.5" stroke="#d4d4d4" stroke-width="1"/><line x1="14" y1="160.5" x2="21" y2="160.5" stroke="#d4d4d4" stroke-width="1"/><line x1="1" y1="168.5" x2="21" y2="168.5" stroke="#c9c9c9" stroke-width="1"/><line x1="14" y1="176.5" x2="21" y2="176.5" stroke="#d4d4d4" stroke-width="1"/><line x1="14" y1="184.5" x2="21" y2="184.5" stroke="#d4d4d4" stroke-width="1"/><line x1="14" y1="192.5" x2="21" y2="192.5" stroke="#d4d4d4" stroke-width="1"/><line x1="14" y1="200.5" x2="21" y2="200.5" stroke="#d4d4d4" stroke-width="1"/><line x1="14" y1="208.5" x2="21" y2="208.5" stroke="#d4d4d4" stroke-width="1"/><line x1="14" y1="215.5" x2="21" y2="215.5" stroke="#d4d4d4" stroke-width="1"/><line x1="14" y1="223.5" x2="21" y2="223.5" stroke="#d4d4d4" stroke-width="1"/><line x1="14" y1="231.5" x2="21" y2="231.5" stroke="#d4d4d4" stroke-width="1"/><line x1="14" y1="239.5" x2="21" y2="239.5" stroke="#d4d4d4" stroke-width="1"/><line x1="1" y1="247.5" x2="21" y2="247.5" stroke="#c9c9c9" stroke-width="1"/><line x1="14" y1="255.5" x2="21" y2="255.5" stroke="#d4d4d4" stroke-width="1"/><line x1="14" y1="263.5" x2="21" y2="263.5" stroke="#d4d4d4" stroke-width="1"/><line x1="14" y1="271.5" x2="21" y2="271.5" stroke="#d4d4d4" stroke-width="1"/><line x1="14" y1="278.5" x2="21" y2="278.5" stroke="#d4d4d4" stroke-width="1"/><line x1="14" y1="286.5" x2="21" y2="286.5" stroke="#d4d4d4" stroke-width="1"/><line x1="14" y1="294.5" x2="21" y2="294.5" stroke="#d4d4d4" stroke-width="1"/><line x1="14" y1="302.5" x2="21" y2="302.5" stroke="#d4d4d4" stroke-width="1"/><line x1="14" y1="310.5" x2="21" y2="310.5" stroke="#d4d4d4" stroke-width="1"/><line x1="14" y1="318.5" x2="21" y2="318.5" stroke="#d4d4d4" stroke-width="1"/><line x1="1" y1="326.5" x2="21" y2="326.5" stroke="#c9c9c9" stroke-width="1"/><line x1="14" y1="334.5" x2="21" y2="334.5" stroke="#d4d4d4" stroke-width="1"/><line x1="14" y1="342.5" x2="21" y2="342.5" stroke="#d4d4d4" stroke-width="1"/><line x1="14" y1="349.5" x2="21" y2="349.5" stroke="#d4d4d4" stroke-width="1"/><line x1="14" y1="357.5" x2="21" y2="357.5" stroke="#d4d4d4" stroke-width="1"/><line x1="14" y1="365.5" x2="21" y2="365.5" stroke="#d4d4d4" stroke-width="1"/><line x1="14" y1="373.5" x2="21" y2="373.5" stroke="#d4d4d4" stroke-width="1"/><line x1="14" y1="381.5" x2="21" y2="381.5" stroke="#d4d4d4" stroke-width="1"/><line x1="14" y1="389.5" x2="21" y2="389.5" stroke="#d4d4d4" stroke-width="1"/><line x1="14" y1="397.5" x2="21" y2="397.5" stroke="#d4d4d4" stroke-width="1"/><line x1="1" y1="405.5" x2="21" y2="405.5" stroke="#c9c9c9" stroke-width="1"/><line x1="14" y1="412.5" x2="21" y2="412.5" stroke="#d4d4d4" stroke-width="1"/><line x1="14" y1="420.5" x2="21" y2="420.5" stroke="#d4d4d4" stroke-width="1"/><line x1="14" y1="428.5" x2="21" y2="428.5" stroke="#d4d4d4" stroke-width="1"/><line x1="14" y1="436.5" x2="21" y2="436.5" stroke="#d4d4d4" stroke-width="1"/><line x1="14" y1="444.5" x2="21" y2="444.5" stroke="#d4d4d4" stroke-width="1"/><line x1="14" y1="452.5" x2="21" y2="452.5" stroke="#d4d4d4" stroke-width="1"/><line x1="14" y1="460.5" x2="21" y2="460.5" stroke="#d4d4d4" stroke-width="1"/><line x1="14" y1="468.5" x2="21" y2="468.5" stroke="#d4d4d4" stroke-width="1"/><line x1="14" y1="476.5" x2="21" y2="476.5" stroke="#d4d4d4" stroke-width="1"/><line x1="1" y1="483.5" x2="21" y2="483.5" stroke="#c9c9c9" stroke-width="1"/><line x1="14" y1="491.5" x2="21" y2="491.5" stroke="#d4d4d4" stroke-width="1"/><line x1="14" y1="499.5" x2="21" y2="499.5" stroke="#d4d4d4" stroke-width="1"/><line x1="14" y1="507.5" x2="21" y2="507.5" stroke="#d4d4d4" stroke-width="1"/><line x1="14" y1="515.5" x2="21" y2="515.5" stroke="#d4d4d4" stroke-width="1"/><line x1="14" y1="523.5" x2="21" y2="523.5" stroke="#d4d4d4" stroke-width="1"/><line x1="14" y1="531.5" x2="21" y2="531.5" stroke="#d4d4d4" stroke-width="1"/><line x1="14" y1="539.5" x2="21" y2="539.5" stroke="#d4d4d4" stroke-width="1"/><line x1="14" y1="547.5" x2="21" y2="547.5" stroke="#d4d4d4" stroke-width="1"/><line x1="14" y1="554.5" x2="21" y2="554.5" stroke="#d4d4d4" stroke-width="1"/><line x1="1" y1="562.5" x2="21" y2="562.5" stroke="#c9c9c9" stroke-width="1"/><line x1="14" y1="570.5" x2="21" y2="570.5" stroke="#d4d4d4" stroke-width="1"/><line x1="14" y1="578.5" x2="21" y2="578.5" stroke="#d4d4d4" stroke-width="1"/><line x1="14" y1="586.5" x2="21" y2="586.5" stroke="#d4d4d4" stroke-width="1"/><line x1="14" y1="594.5" x2="21" y2="594.5" stroke="#d4d4d4" stroke-width="1"/><line x1="21.5" y1="0" x2="21.5" y2="600" stroke="#e6e7ec"/></svg><div class="t" style="left:-0.5px;top:7.9px;font-size:14.5px;color:#a0a0a0;transform:rotate(-90deg) scaleX(0.9);transform-origin:0 0">0</div><div class="t" style="left:-0.5px;top:86.7px;font-size:14.5px;color:#a0a0a0;transform:rotate(-90deg) scaleX(0.9);transform-origin:0 0">100</div><div class="t" style="left:-0.5px;top:165.6px;font-size:14.5px;color:#a0a0a0;transform:rotate(-90deg) scaleX(0.9);transform-origin:0 0">200</div><div class="t" style="left:-0.5px;top:244.4px;font-size:14.5px;color:#a0a0a0;transform:rotate(-90deg) scaleX(0.9);transform-origin:0 0">300</div><div class="t" style="left:-0.5px;top:323.3px;font-size:14.5px;color:#a0a0a0;transform:rotate(-90deg) scaleX(0.9);transform-origin:0 0">400</div><div class="t" style="left:-0.5px;top:402.1px;font-size:14.5px;color:#a0a0a0;transform:rotate(-90deg) scaleX(0.9);transform-origin:0 0">500</div><div class="t" style="left:-0.5px;top:481.0px;font-size:14.5px;color:#a0a0a0;transform:rotate(-90deg) scaleX(0.9);transform-origin:0 0">600</div><div class="t" style="left:-0.5px;top:559.8px;font-size:14.5px;color:#a0a0a0;transform:rotate(-90deg) scaleX(0.9);transform-origin:0 0">700</div></div>
<div class="abs" style="left:0;top:111px;width:22px;height:21px;background:#fff;border-right:1px solid #e6e7ec"></div>
<svg class="abs" style="left:4px;top:115px" width="15" height="12" viewBox="0 0 15 12"><path d="M0.5 6C2.5 2.3 5 1 7.5 1S12.5 2.3 14.5 6C12.5 9.7 10 11 7.5 11S2.5 9.7 0.5 6Z" fill="#222"/><circle cx="7.5" cy="6" r="2.6" fill="#fff"/><circle cx="7.5" cy="6" r="1.2" fill="#222"/></svg>

<!-- RIGHT PANEL -->
<div id="rpanel" class="abs" style="left:1250px;top:110px;width:315px;height:806px;background:#fff;border-left:1px solid #e6e9ef"></div>
<div class="abs" style="left:1251px;top:110px;width:314px;height:44px;background:#f5f8fc;border-bottom:1px solid #e8ecf2"></div>
<div class="abs" style="left:0;top:109px;width:1565px;height:2px;background:#e6e7ec"></div>
<div class="abs" style="left:1251px;top:110px;width:77px;height:44px;background:#fff;border-bottom:1px solid #fff"></div>
<div class="abs" style="left:1328px;top:110px;width:1px;height:43px;background:#e8ecf2"></div>
<div class="abs" style="left:1407px;top:110px;width:1px;height:43px;background:#e8ecf2"></div>
<div class="abs" style="left:1485px;top:110px;width:1px;height:43px;background:#e8ecf2"></div>
<div class="t" style="left:1277px;top:124.5px;font-size:13px;font-weight:bold;color:#4d5ef7">内容</div>
<div class="t" style="left:1355px;top:124.5px;font-size:13px;font-weight:bold;color:#1f1f1f">交互</div>
<div class="t" style="left:1433px;top:124.5px;font-size:13px;font-weight:bold;color:#1f1f1f">动画</div>
<div class="t" style="left:1512px;top:124.5px;font-size:13px;font-weight:bold;color:#1f1f1f">组件</div>
<svg class="abs" style="left:1330px;top:195px" width="150" height="125" viewBox="1330 195 150 125">
 <defs>
  <linearGradient id="gp" x1="0" y1="0" x2="1" y2="1"><stop offset="0" stop-color="#e9ecfd"/><stop offset="1" stop-color="#c9d0fa"/></linearGradient>
  <linearGradient id="gs" x1="0" y1="0" x2="0" y2="1"><stop offset="0" stop-color="#f4f5fe"/><stop offset="1" stop-color="#cdd3fb"/></linearGradient>
  <linearGradient id="gpan" x1="0" y1="0" x2="1" y2="0.3"><stop offset="0" stop-color="#c5cdfa"/><stop offset="0.6" stop-color="#e4e8fd"/><stop offset="1" stop-color="#f7f8ff"/></linearGradient>
  <linearGradient id="gbtn" x1="0" y1="0" x2="1" y2="0"><stop offset="0" stop-color="#6d7df3"/><stop offset="1" stop-color="#a1adf8"/></linearGradient>
  <linearGradient id="gsp1" x1="0" y1="0" x2="0" y2="1"><stop offset="0" stop-color="#d8ddfc"/><stop offset="1" stop-color="#f4f5fe"/></linearGradient>
  <linearGradient id="gsp2" x1="0" y1="0" x2="0" y2="1"><stop offset="0" stop-color="#5567f3"/><stop offset="1" stop-color="#c6cdfa"/></linearGradient>
 </defs>
 <linearGradient id="gs2" x1="0" y1="0" x2="0" y2="1"><stop offset="0" stop-color="#ffffff"/><stop offset="1" stop-color="#c3cbfa"/></linearGradient><linearGradient id="gtop" x1="0" y1="0" x2="0.3" y2="1"><stop offset="0" stop-color="#e2e6fd"/><stop offset="1" stop-color="#f9faff"/></linearGradient><path d="M1353.8 280.4L1407.2 262.2L1461.2 280.4V289.8L1407.8 309.3L1353.8 289.8Z" fill="url(#gs2)"/>
 <path d="M1353.8 280.4L1407.2 262.2L1461.2 280.4L1407.5 298.6Z" fill="url(#gtop)"/>
 <ellipse cx="1409" cy="280.6" rx="31" ry="3.3" fill="#bcc4f9" opacity="0.85"/>
 <path d="M1364.5 212.3L1450.5 209V276.4L1364.5 268.1Z" fill="url(#gpan)" opacity="0.95"/>
 <path d="M1364.5 212.3L1450.5 209V276.4L1364.5 268.1" fill="none" stroke="#b3bcf9" stroke-width="0.8"/>
 <path d="M1380 268L1407 262.2L1450.5 276.4Z" fill="#c4ccfa" opacity="0.6"/>
 <rect x="1360.1" y="230.1" width="64" height="19.5" rx="2" fill="url(#gbtn)"/>
 <text x="1372" y="244.6" font-family="Liberation Sans" font-weight="bold" font-size="15" fill="#dfe4fd" letter-spacing="3.3">BTN</text>
 <path d="M1415.3 242.7L1405.9 257.3H1413.3V261.5H1416.3V257.3H1423.9Z" fill="#5a6cf5"/>
 <circle cx="1354" cy="230.5" r="6" fill="url(#gsp1)"/>
 <circle cx="1462.4" cy="255.3" r="6" fill="url(#gsp2)"/>
 <circle cx="1346.3" cy="270" r="3.2" fill="#e4e8fd"/>
 <g fill="#fff" stroke="#7383f5" stroke-width="1.35">
  <circle cx="1364.5" cy="212.3" r="2.6"/><circle cx="1404.7" cy="210.7" r="2.6"/><circle cx="1450.5" cy="209" r="2.6"/>
  <circle cx="1450.5" cy="241.2" r="2.6"/><circle cx="1450.5" cy="276.4" r="2.6"/><circle cx="1404.7" cy="273.1" r="2.6"/><circle cx="1364.5" cy="268.1" r="2.6"/>
 </g>
</svg>
<div class="t" style="left:1333px;top:326px;font-size:13.5px;letter-spacing:-0.5px;color:#222">请点击编辑组件进行设置</div>
<div class="abs" style="left:1339px;top:352px;width:139px;height:30px;background:#525ee3;border:3px solid #f6a30f;border-radius:4px"></div>
<div class="t" style="left:1381px;top:361px;font-size:13.5px;letter-spacing:-0.5px;color:#fff">编辑组件</div>
<svg class="abs" style="left:1250px;top:325px" width="90" height="80" viewBox="1250 325 90 80">
 <defs><filter id="sh" x="-50%" y="-50%" width="200%" height="200%"><feGaussianBlur in="SourceAlpha" stdDeviation="4.5"/><feOffset dx="0" dy="3"/><feComponentTransfer><feFuncA type="linear" slope="0.22"/></feComponentTransfer><feMerge><feMergeNode/><feMergeNode in="SourceGraphic"/></feMerge></filter></defs>
 <g filter="url(#sh)">
  <path d="M1266 363.4H1313M1296 347L1313.5 363.4L1296 379.8" fill="none" stroke="#fff" stroke-width="11" stroke-linecap="round" stroke-linejoin="round"/>
  <path d="M1267 363.4H1312M1296 347.5L1313 363.4L1296 379.3" fill="none" stroke="#e8920d" stroke-width="5.2" stroke-linecap="butt" stroke-linejoin="miter"/>
 </g>
</svg>

<!-- BOTTOM PANEL -->
<div class="abs" style="left:22px;top:720.5px;width:1228px;height:6.5px;background:#ededee"></div>
<div class="abs" style="left:615px;top:721px;width:37px;height:6px;background:#d9d9d9;border-radius:3px"></div>
<div class="abs" style="left:1244px;top:132px;width:6px;height:588px;background:#ececee"></div>
<div class="abs" style="left:1244px;top:417px;width:6px;height:19px;background:#d9d9d9;border-radius:3px"></div>
<div id="pages" class="abs" style="left:0;top:727px;width:1250px;height:143px;background:#f5f8fc"></div>
<div class="t" style="left:14px;top:737px;font-size:13.5px;letter-spacing:-0.5px;color:#222">收起分页</div>
<svg class="abs" style="left:74px;top:740px" width="14" height="9" viewBox="0 0 14 9"><path d="M0.5 0.5H13.5L7 8.5Z" fill="#222"/></svg>
<div class="abs" style="left:14px;top:762px;width:1223px;height:1px;background:#e3e7ee"></div>
<svg class="abs" style="left:1011px;top:737px" width="14" height="17" viewBox="0 0 14 17"><path d="M1.3 2H12.7L8.3 8.3V15L5.7 13.6V8.3Z" fill="#c5cbfa" stroke="#4d5ef0" stroke-width="1.2" stroke-linejoin="round"/><path d="M1.3 2H12.7L8.3 8.3H5.7Z" fill="#f5f8fc" stroke="#4d5ef0" stroke-width="1.2" stroke-linejoin="round"/></svg>
<div class="t" style="left:1031px;top:739px;font-size:13.5px;letter-spacing:-0.5px;color:#4d5ef0">查询面板设置</div>
<svg class="abs" style="left:1128px;top:736px" width="17" height="17" viewBox="0 0 17 17"><path d="M7 1.5H10L10.5 3.5L12.3 4.5L14.3 3.9L15.8 6.5L14.3 8L14.3 9.9L15.8 11.4L14.3 14L12.3 13.5L10.5 14.5L10 16.5H7L6.5 14.5L4.7 13.5L2.7 14L1.2 11.4L2.7 9.9V8L1.2 6.5L2.7 3.9L4.7 4.5L6.5 3.5Z" fill="none" stroke="#4d5ef0" stroke-width="1.2" stroke-linejoin="round"/><circle cx="8.5" cy="9" r="2.5" fill="none" stroke="#4d5ef0" stroke-width="1.2"/></svg>
<div class="t" style="left:1150px;top:739px;font-size:13.5px;letter-spacing:-0.5px;color:#4d5ef0">预览播放设置</div>
<div class="abs" style="left:9px;top:772px;width:154px;height:90px;background:#dde2fc"></div>
<div class="abs" style="left:12px;top:774px;width:148px;height:85px;background:#eeeff3;border:2px solid #3b4ff5"></div>
<div class="abs" style="left:45px;top:779px;width:81px;height:6px;background:#c0c1c5"></div>
<div class="abs" style="left:14px;top:788px;width:25px;height:15px;background:#c0c1c5"></div>
<div class="abs" style="left:54px;top:788px;width:25px;height:15px;background:#c0c1c5"></div>
<div class="abs" style="left:94px;top:788px;width:26px;height:15px;background:#c0c1c5"></div>
<div class="abs" style="left:132px;top:788px;width:26px;height:15px;background:#c0c1c5"></div>
<div class="abs" style="left:14px;top:804px;width:75px;height:53px;background:#c0c1c5"></div>
<div class="abs" style="left:90px;top:804px;width:68px;height:53px;background:#c0c1c5"></div>
<div class="abs" style="left:112px;top:837px;width:46px;height:20px;background:#a9acd1"></div>
<div class="t" style="left:117px;top:839px;font-size:13px;color:#5366f2">页面1</div>
<div class="abs" style="left:167px;top:776px;width:144px;height:81px;background:#fff;border:1px dashed #d4d6dc"></div>
<svg class="abs" style="left:202px;top:808px" width="14" height="14" viewBox="0 0 14 14"><path d="M7 1V13M1 7H13" stroke="#888" stroke-width="1.1"/></svg>
<div class="t" style="left:221px;top:808px;font-size:13.5px;letter-spacing:-0.5px;color:#888">新建页面</div>
<div id="status" class="abs" style="left:0;top:870px;width:1250px;height:46px;background:#fff;border-top:1px solid #e5e8ee"></div>
<svg class="abs" style="left:19px;top:885px" width="16" height="16" viewBox="0 0 16 16"><path d="M8 1.5L14.5 5L8 8.5L1.5 5Z" fill="none" stroke="#555" stroke-width="1.1" stroke-linejoin="round"/><path d="M1.5 8.2L8 11.7L14.5 8.2M1.5 11.2L8 14.7L14.5 11.2" fill="none" stroke="#555" stroke-width="1.1" stroke-linejoin="round"/></svg>
<svg class="abs" style="left:55px;top:888.5px" width="16" height="11" viewBox="0 0 16 11"><rect x="0.6" y="0.6" width="14.8" height="9.4" rx="0.6" fill="none" stroke="#555" stroke-width="1.1"/><path d="M3 4H3.8M5.6 4H6.4M8.2 4H9M10.8 4H11.6M3 7H3.8M11 7H12M5.8 7H10" stroke="#555" stroke-width="0.9"/></svg>
<div class="t" style="left:627px;top:885px;font-size:13.5px;letter-spacing:-0.5px;color:#888">画布尺寸：<span style="font-size:13.5px;letter-spacing:-0.1px">1280×720px</span></div>
<svg class="abs" style="left:776px;top:884px" width="15" height="16" viewBox="0 0 15 16"><path d="M3 11.5L10.5 4L12.5 6L5 13.5H3Z" fill="none" stroke="#333" stroke-width="1.1"/><path d="M9.2 5.3L11.2 7.3M1.5 15H13.5" stroke="#333" stroke-width="1.1"/></svg>
<div class="abs" style="left:809px;top:887px;width:1px;height:11px;background:#e4e4e4"></div>
<div class="t" style="left:827px;top:885px;font-size:13.5px;letter-spacing:-0.5px;color:#888">画布自适应:</div>
<div class="abs" style="left:909px;top:880px;width:135px;height:27px;background:#fff;border:1px solid #dcdfe6;border-radius:2px"></div>
<div class="t" style="left:920px;top:885px;font-size:13.5px;letter-spacing:-0.5px;color:#222">自动</div>
<svg class="abs" style="left:1018px;top:887px" width="16" height="11" viewBox="0 0 16 11"><path d="M1.5 1.5L8 8.5L14.5 1.5" fill="none" stroke="#555" stroke-width="1.15"/></svg>
<div class="abs" style="left:1062px;top:887px;width:1px;height:11px;background:#e4e4e4"></div>
<svg class="abs" style="left:1079px;top:884px" width="18" height="18" viewBox="0 0 18 18"><circle cx="9" cy="9" r="7.6" fill="none" stroke="#5a5a5a" stroke-width="1"/><path d="M5.3 9H12.7" stroke="#888" stroke-width="1.3"/></svg>
<div class="abs" style="left:1102px;top:880px;width:112px;height:27px;background:#fff;border:1px solid #dcdfe6;border-radius:2px"></div>
<div class="t" style="left:1111.5px;top:887.5px;font-size:13.5px;color:#222">70%</div>
<svg class="abs" style="left:1185px;top:887px" width="16" height="11" viewBox="0 0 16 11"><path d="M1 1L8 9.5L15 1" fill="none" stroke="#555" stroke-width="1.1"/></svg>
<svg class="abs" style="left:1219px;top:884px" width="18" height="18" viewBox="0 0 18 18"><circle cx="9" cy="9" r="7.6" fill="none" stroke="#5a5a5a" stroke-width="1"/><path d="M5.3 9H12.7M9 5.3V12.7" stroke="#888" stroke-width="1.3"/></svg>
</div>
<div id="pb"></div>
</body></html>
